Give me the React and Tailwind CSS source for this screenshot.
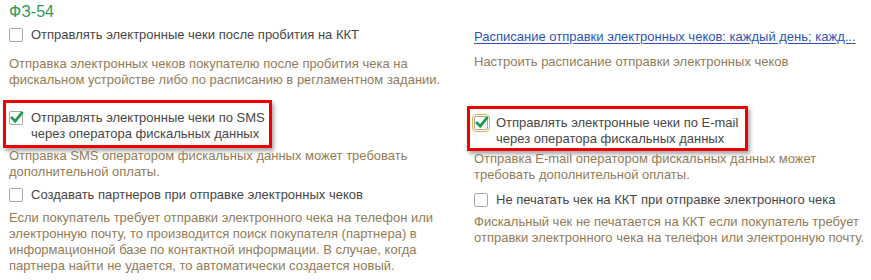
import React from 'react'

function CheckBox({ checked, focused }) {
  return (
    <span
      className={
        'relative shrink-0 w-[14px] h-[14px] rounded-[2px] border border-[#a8a8a8] bg-white ' +
        (focused ? 'outline outline-1 outline-offset-1 outline-[#e2b84a]' : '')
      }
    >
      {checked && (
        <svg className="absolute left-[-1px] top-[-2px] overflow-visible" width="15" height="15" viewBox="0 0 15 15">
          <path d="M3 8 L6.2 11.2 L12.8 3" fill="none" stroke="#1d9a4b" strokeWidth="2.7" strokeLinecap="square" />
        </svg>
      )}
    </span>
  )
}

function Row({ checked, focused, children }) {
  return (
    <div className="flex items-start gap-[8px] text-[#474747] leading-[16px]">
      <span className="pt-[1px] flex">
        <CheckBox checked={checked} focused={focused} />
      </span>
      <span className="whitespace-nowrap">{children}</span>
    </div>
  )
}

function Hint({ children, className = '' }) {
  return <p className={'text-[#927c58] leading-[16px] whitespace-nowrap ' + className}>{children}</p>
}

export default function App() {
  return (
    <div
      className="w-[871px] h-[280px] bg-white overflow-hidden flex text-[13px]"
      style={{ fontFamily: '"Liberation Sans", Arial, sans-serif' }}
    >
      {/* left column */}
      <div className="w-[474px] pl-[9px] flex flex-col">
        <h2 className="pt-[2px] text-[16px] leading-[20px] text-[#2f9a5a]">ФЗ-54</h2>
        <div className="mt-[5px]">
          <Row>Отправлять электронные чеки после пробития на ККТ</Row>
        </div>
        <Hint className="mt-[13px]">
          Отправка электронных чеков покупателю после пробития чека на
          <br />
          фискальном устройстве либо по расписанию в регламентном задании.
        </Hint>
        <div className="mt-[12px] ml-[-6px] w-[269px] border-[3px] border-[#f00000] px-[3px] pt-[7px] pb-[3px] shadow-[2px_3px_4px_rgba(0,0,0,0.35)]">
          <Row checked>
            Отправлять электронные чеки по SMS
            <br />
            через оператора фискальных данных
          </Row>
        </div>
        <Hint>
          Отправка SMS оператором фискальных данных может требовать
          <br />
          дополнительной оплаты.
        </Hint>
        <div className="mt-[7px]">
          <Row>Создавать партнеров при отправке электронных чеков</Row>
        </div>
        <Hint className="mt-[7px]">
          Если покупатель требует отправки электронного чека на телефон или
          <br />
          электронную почту, то производится поиск покупателя (партнера) в
          <br />
          информационной базе по контактной информации. В случае, когда
          <br />
          партнера найти не удается, то автоматически создается новый.
        </Hint>
      </div>

      {/* right column */}
      <div className="flex-1 flex flex-col pt-[29px]">
        <a className="leading-[16px] text-[#2c55b6] underline underline-offset-2 whitespace-nowrap cursor-pointer">
          Расписание отправки электронных чеков: каждый день; кажд...
        </a>
        <Hint className="mt-[9px]">Настроить расписание отправки электронных чеков</Hint>
        <div className="mt-[36px] ml-[-7px] w-[281px] border-[3px] border-[#f00000] pl-[4px] pt-[6px] pb-[1px] shadow-[2px_3px_4px_rgba(0,0,0,0.35)]">
          <Row checked focused>
            Отправлять электронные чеки по E-mail
            <br />
            через оператора фискальных данных
          </Row>
        </div>
        <Hint>
          Отправка E-mail оператором фискальных данных может
          <br />
          требовать дополнительной оплаты.
        </Hint>
        <div className="mt-[9px]">
          <Row>Не печатать чек на ККТ при отправке электронного чека</Row>
        </div>
        <Hint className="mt-[6px]">
          Фискальный чек не печатается на ККТ если покупатель требует
          <br />
          отправки электронного чека на телефон или электронную почту.
        </Hint>
      </div>
    </div>
  )
}
